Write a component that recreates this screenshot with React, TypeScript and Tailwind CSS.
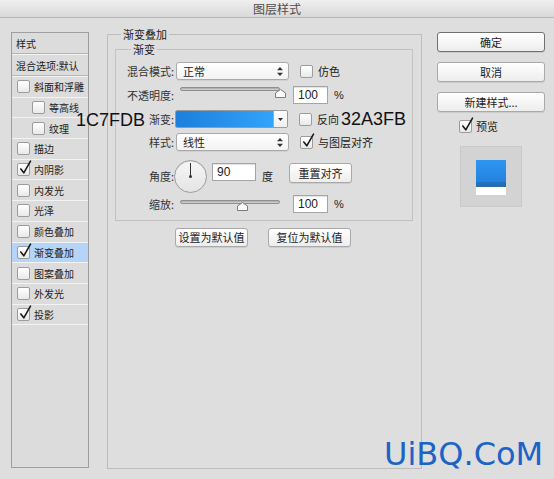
import React from "react";

type Item = { name: string; on?: boolean; indent?: boolean; active?: boolean };

const items: Item[] = [
  { name: "斜面和浮雕" },
  { name: "等高线", indent: true },
  { name: "纹理", indent: true },
  { name: "描边" },
  { name: "内阴影", on: true },
  { name: "内发光" },
  { name: "光泽" },
  { name: "颜色叠加" },
  { name: "渐变叠加", on: true, active: true },
  { name: "图案叠加" },
  { name: "外发光" },
  { name: "投影", on: true },
];

const Check = ({ on }: { on?: boolean }) => (
  <span className="relative block w-[13px] h-[13px] shrink-0 rounded-[2px] border border-[#9c9c9c] bg-gradient-to-b from-white to-[#e9e9e9]">
    {on && (
      <svg className="absolute -top-[4px] left-[1px] overflow-visible" width="13" height="15" viewBox="0 0 13 15">
        <path d="M1.8 9 L4.8 12.8 L11.5 1.2" fill="none" stroke="#1a1a1a" strokeWidth="1.6" strokeLinecap="round" strokeLinejoin="round" />
      </svg>
    )}
  </span>
);

const Updown = () => (
  <svg width="6" height="9" viewBox="0 0 6 9">
    <path d="M3 0 L6 3.2 L0 3.2 Z M3 9 L6 5.8 L0 5.8 Z" fill="#333" />
  </svg>
);

const Select = ({ value }: { value: string }) => (
  <div className="w-[113px] h-[18px] flex items-center justify-between pl-[6px] pr-[5px] rounded-[3px] border border-[#a9a9a9] bg-gradient-to-b from-white to-[#f3f3f3] shadow-[0_1px_0_rgba(0,0,0,0.06)]">
    <span className="leading-[16px]">{value}</span>
    <Updown />
  </div>
);

const Field = ({ value, w }: { value: string; w: string }) => (
  <div className={`${w} h-[18px] flex items-center pl-[4px] bg-white border border-[#a5a5a5] shadow-[inset_0_1px_1px_rgba(0,0,0,0.12)] font-['Liberation_Sans',sans-serif] text-[12px]`}>
    {value}
  </div>
);

const Button = ({ label, w, h = "h-[20px]", strong }: { label: string; w: string; h?: string; strong?: boolean }) => (
  <div
    className={`${w} ${h} flex items-center justify-center rounded-[3px] border ${
      strong ? "border-[#707070]" : "border-[#a9a9a9]"
    } bg-gradient-to-b from-white to-[#ededed] shadow-[0_1px_0_rgba(0,0,0,0.08)]`}
  >
    {label}
  </div>
);

const Slider = ({ thumb, extra }: { thumb: string; extra?: string }) => (
  <div className={`relative w-[100px] h-[12px] ml-[4px] self-start ${extra ?? ""}`}>
    <div className="absolute top-[1px] left-0 right-0 h-[4px] rounded-full border border-[#8f8f8f] bg-gradient-to-b from-[#a8a8a8] to-[#d6d6d6]" />
    <svg className={`absolute top-[3px] ${thumb}`} width="11" height="9" viewBox="0 0 11 9">
      <path d="M5.5 0.5 L10.5 4 L10.5 8.5 L0.5 8.5 L0.5 4 Z" fill="#fafafa" stroke="#7c7c7c" strokeWidth="1" strokeLinejoin="round" />
    </svg>
  </div>
);

const Label = ({ text, children }: { text: string; children?: React.ReactNode }) => (
  <div className="relative w-[60px] shrink-0 text-right pr-[2px] text-[#333]">
    {children}
    {text}
  </div>
);

export default function App() {
  return (
    <div className="relative w-[554px] h-[479px] overflow-hidden bg-[#dedede] flex flex-col font-['Noto_Sans_CJK_SC',sans-serif] text-[11px] leading-[15px] text-[#222]">
      <div className="h-[18px] shrink-0 flex items-center justify-center border-b border-[#b6b6b6] bg-gradient-to-b from-[#efefef] to-[#d9d9d9] text-[12px] text-[#4d4d4d]">
        图层样式
      </div>

      <div className="flex">
        {/* styles list */}
        <div className="ml-[11px] mt-[14px] w-[78px] h-[436px] border border-[#9f9f9f] bg-[#dcdcdc] flex flex-col text-[10px] whitespace-nowrap">
          <div className="h-[21px] flex items-center pl-[4px] border-b border-[#b3b3b3]">样式</div>
          <div className="h-[22px] flex items-center pl-[4px] border-t border-[#f4f4f4] border-b border-b-[#b8b8b8]">混合选项:默认</div>
          {items.map((it) => (
            <div
              key={it.name}
              className={`h-[20.7px] flex items-center gap-[4px] border-t border-[#f3f3f3] ${it.indent ? "pl-[20px]" : "pl-[5px]"} ${
                it.active ? "bg-[#b4d5f7]" : ""
              }`}
            >
              <Check on={it.on} />
              <span>{it.name}</span>
            </div>
          ))}
          <div className="border-t border-[#f3f3f3]" />
        </div>

        {/* main settings */}
        <fieldset className="ml-[18px] mt-[9px] w-[315px] h-[442px] border border-[#bdbdbd]">
          <legend className="ml-[13px] px-[2px] leading-[15px]">渐变叠加</legend>
          <fieldset className="ml-[7px] w-[298px] border border-[#c2c2c2] pt-[5px] pb-[7px]">
            <legend className="ml-[15px] px-[2px] leading-[15px]">渐变</legend>

            <div className="flex items-center h-[18px]">
              <Label text="混合模式:" />
              <Select value="正常" />
              <div className="ml-[11px]"><Check /></div>
              <span className="ml-[5px]">仿色</span>
            </div>

            <div className="flex items-center h-[18px] mt-[6px]">
              <Label text="不透明度:" />
              <Slider thumb="left-[95px]" />
              <div className="ml-[13px]"><Field value="100" w="w-[35px]" /></div>
              <span className="ml-[6px] font-['Liberation_Sans',sans-serif]">%</span>
            </div>

            <div className="flex items-center h-[18px] mt-[6px]">
              <Label text="渐变:">
                <span className="absolute right-[31px] -top-[2px] font-['Liberation_Sans',sans-serif] text-[18px] leading-[20px] text-[#111] whitespace-nowrap">
                  1C7FDB
                </span>
              </Label>
              <div className="w-[113px] h-[18px] -ml-[1px] flex border border-[#9a9a9a] rounded-[2px] overflow-hidden">
                <div className="flex-1 bg-gradient-to-r from-[#1c7fdb] to-[#32a3fb]" />
                <div className="w-[14px] flex items-center justify-center border-l border-[#a9a9a9] bg-gradient-to-b from-white to-[#efefef]">
                  <svg width="5" height="3" viewBox="0 0 5 3"><path d="M0 0 L5 0 L2.5 3 Z" fill="#333" /></svg>
                </div>
              </div>
              <div className="ml-[11px]"><Check /></div>
              <span className="ml-[5px]">反向</span>
              <span className="ml-[2px] font-['Liberation_Sans',sans-serif] text-[18px] leading-[20px] text-[#111]">32A3FB</span>
            </div>

            <div className="flex items-center h-[18px] mt-[5px]">
              <Label text="样式:" />
              <Select value="线性" />
              <div className="ml-[11px]"><Check on /></div>
              <span className="ml-[5px]">与图层对齐</span>
            </div>

            <div className="flex items-center h-[34px] mt-[8px]">
              <Label text="角度:" />
              <div className="relative -ml-[2px] w-[33px] h-[33px] rounded-full border border-[#9d9d9d] bg-gradient-to-b from-[#f6f6f6] to-[#e4e4e4] shadow-[inset_0_1px_1px_rgba(0,0,0,0.1)]">
                <div className="absolute left-[15px] top-[2px] w-[1px] h-[14px] bg-[#333]" />
                <div className="absolute left-[14px] top-[14px] w-[3px] h-[3px] rounded-full bg-[#333]" />
              </div>
              <div className="self-start mt-[4px] ml-[5px]"><Field value="90" w="w-[44px]" /></div>
              <span className="ml-[6px]">度</span>
              <div className="self-start mt-[4px] ml-[16px]"><Button label="重置对齐" w="w-[63px]" /></div>
            </div>

            <div className="flex items-center h-[18px] mt-[2px]">
              <Label text="缩放:" />
              <Slider thumb="left-[57px]" extra="mt-[4px]" />
              <div className="ml-[13px]"><Field value="100" w="w-[35px]" /></div>
              <span className="ml-[6px] font-['Liberation_Sans',sans-serif]">%</span>
            </div>
          </fieldset>

          <div className="flex gap-[20px] ml-[67px] mt-[7px]">
            <Button label="设置为默认值" w="w-[73px]" h="h-[19px]" />
            <Button label="复位为默认值" w="w-[83px]" h="h-[19px]" />
          </div>
        </fieldset>

        {/* right column */}
        <div className="ml-[15px] mt-[14px] w-[108px] flex flex-col">
          <div className="flex flex-col gap-[10px]">
            <Button label="确定" w="w-[108px]" strong />
            <Button label="取消" w="w-[108px]" />
            <Button label="新建样式..." w="w-[108px]" />
          </div>
          <div className="flex items-center gap-[4px] pl-[22px] mt-[7px] h-[15px]">
            <Check on />
            <span>预览</span>
          </div>
          <div className="ml-[23px] mt-[12px] w-[62px] h-[61px] bg-[#d3d3d3] border border-[#c9c9c9] flex items-center justify-center">
            <div className="w-[30px] flex flex-col mt-[1px]">
              <div className="h-[22px] bg-gradient-to-b from-[#2f95f2] to-[#2283dd]" />
              <div className="h-[5px] bg-gradient-to-b from-[#1f72c2] to-[#2a6aa6]" />
              <div className="h-[8px] bg-white" />
            </div>
          </div>
        </div>
      </div>

      <div className="absolute left-[384px] top-[438px] font-['DejaVu_Sans',sans-serif] text-[32px] leading-[32px] text-[#1b63c6] whitespace-nowrap">
        UiBQ.CoM
      </div>
    </div>
  );
}
